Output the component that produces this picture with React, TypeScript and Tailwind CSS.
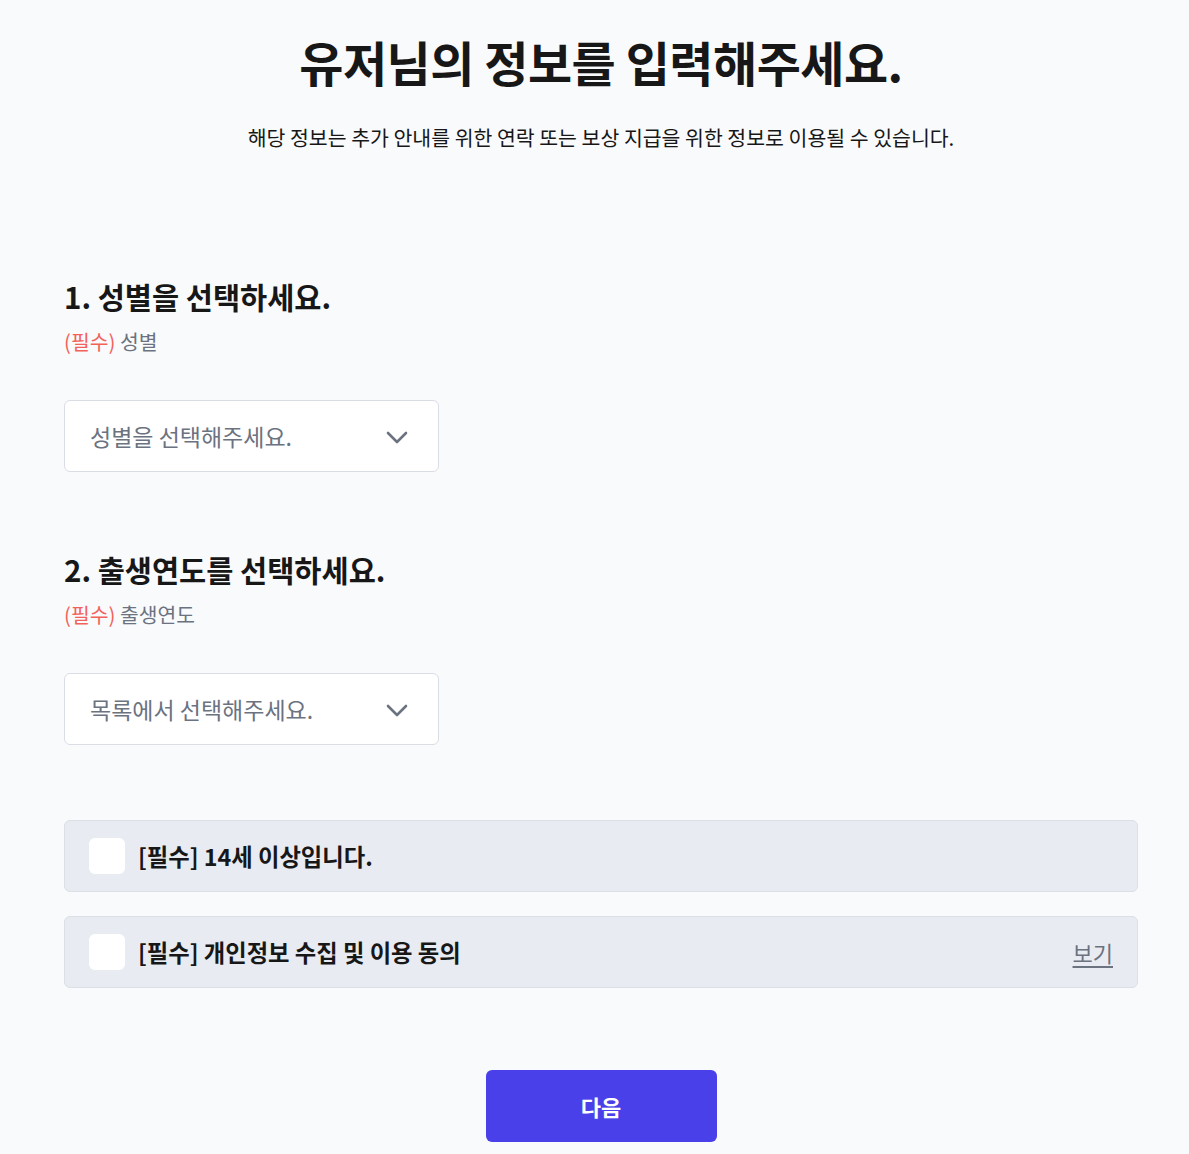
const font = "font-['Noto_Sans_CJK_KR','Noto_Sans',sans-serif]";

function Chevron() {
  return (
    <svg width="22" height="14" viewBox="0 0 22 14" fill="none" className="mt-1 text-[#6b7280]">
      <polyline points="2,2 11,11 20,2" stroke="currentColor" strokeWidth="2.6" strokeLinecap="round" strokeLinejoin="round" />
    </svg>
  );
}

function SelectBox({ placeholder }: { placeholder: string }) {
  return (
    <button className="flex h-[72px] w-[375px] items-center justify-between rounded-md border border-[#dadde3] bg-white pl-[25px] pr-[30px] text-left">
      <span className="text-[23px] text-[#6b7280]">{placeholder}</span>
      <Chevron />
    </button>
  );
}

function Section({ title, label, placeholder }: { title: string; label: string; placeholder: string }) {
  return (
    <div>
      <h2 className="h-10 text-[29.5px] font-bold leading-10 text-[#171717]">{title}</h2>
      <p className="mt-[10px] h-[30px] text-[20.4px] leading-[30px] text-[#6b7280]">
        <span className="text-[#f2625b]">(필수)</span> {label}
      </p>
      <div className="mt-[44px]">
        <SelectBox placeholder={placeholder} />
      </div>
    </div>
  );
}

function AgreeRow({ text, link }: { text: string; link?: boolean }) {
  return (
    <div className="flex h-[72px] items-center justify-between rounded-md border border-[#dcdfe6] bg-[#e9ebf2] pl-6 pr-6">
      <label className="flex items-center gap-[13px]">
        <span className="h-9 w-9 rounded-md bg-white" />
        <span className="text-[23.3px] font-bold text-[#171717]">{text}</span>
      </label>
      {link && <a className="text-[22px] text-[#6b7280] underline underline-offset-4">보기</a>}
    </div>
  );
}

export default function App() {
  return (
    <div className={`min-h-screen bg-[#f9fafb] ${font}`}>
      <div className="pl-16 pr-[51px] pt-[25px] pb-3">
        <h1 className="h-[72px] text-center text-[48px] font-bold leading-[72px] tracking-[-0.5px] text-[#171717]">
          유저님의 정보를 입력해주세요.
        </h1>
        <p className="mt-[25px] h-[30px] text-center text-[20.5px] leading-[30px] text-[#171717]">
          해당 정보는 추가 안내를 위한 연락 또는 보상 지급을 위한 정보로 이용될 수 있습니다.
        </p>

        <div className="mt-[124px]">
          <Section title="1. 성별을 선택하세요." label="성별" placeholder="성별을 선택해주세요." />
        </div>
        <div className="mt-[77px]">
          <Section title="2. 출생연도를 선택하세요." label="출생연도" placeholder="목록에서 선택해주세요." />
        </div>

        <div className="mt-[75px] flex flex-col gap-6">
          <AgreeRow text="[필수] 14세 이상입니다." />
          <AgreeRow text="[필수] 개인정보 수집 및 이용 동의" link />
        </div>

        <div className="mt-[82px] flex justify-center">
          <button className="h-[72px] w-[231px] rounded-md bg-[#4a40e9] text-[22px] font-bold text-white">다음</button>
        </div>
      </div>
    </div>
  );
}
